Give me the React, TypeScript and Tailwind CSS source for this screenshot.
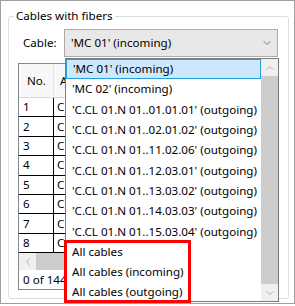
import { ChevronDown, ChevronUp, ChevronLeft } from "lucide-react";

const items = [
  "'MC 01' (incoming)",
  "'MC 02' (incoming)",
  "'C.CL 01.N 01..01.01.01' (outgoing)",
  "'C.CL 01.N 01..02.01.02' (outgoing)",
  "'C.CL 01.N 01..11.02.06' (outgoing)",
  "'C.CL 01.N 01..12.03.01' (outgoing)",
  "'C.CL 01.N 01..13.03.02' (outgoing)",
  "'C.CL 01.N 01..14.03.03' (outgoing)",
  "'C.CL 01.N 01..15.03.04' (outgoing)",
  "All cables",
  "All cables (incoming)",
  "All cables (outgoing)",
];

const rows = [1, 2, 3, 4, 5, 6, 7, 8];

function DropdownList() {
  return (
    <div className="absolute left-[64px] top-[57px] flex h-[244px] w-[214px] border border-[#7a7a7a] bg-white">
      <ul className="flex-1">
        {items.map((item, i) => (
          <li
            key={item}
            className={`flex h-[20.3px] items-center whitespace-nowrap pl-[6px] ${
              i === 0 ? "border border-[#26a0da] bg-[#cce8ff] pl-[5px]" : ""
            }`}
          >
            {item}
          </li>
        ))}
      </ul>
      <div className="flex w-[17px] flex-col bg-[#f0f0f0]">
        <div className="flex h-[17px] items-center justify-center text-[#a0a0a0]">
          <ChevronUp size={12} strokeWidth={1.5} />
        </div>
        <div className="flex-1 bg-[#cdcdcd]" />
        <div className="flex h-[17px] items-center justify-center text-[#a0a0a0]">
          <ChevronDown size={12} strokeWidth={1.5} />
        </div>
      </div>
    </div>
  );
}

function CableTable() {
  return (
    <div className="ml-[9px] mr-[10px] mt-[6px] flex h-[227px] flex-col border border-[#828790] bg-white">
      <div className="flex h-[34px] border-b border-[#d5d5d5] bg-[#f8f8f8]">
        <div className="flex w-[35px] items-center border-r border-[#e5e5e5] pl-[8px]">No.</div>
        <div className="flex flex-1 items-center pl-[6px]">A</div>
      </div>
      {rows.map((n) => (
        <div key={n} className="flex h-[19.4px] border-b border-black">
          <div className="flex w-[35px] items-center border-r border-black pl-[4px]">{n}</div>
          <div className="flex flex-1 items-center pl-[3px]">C</div>
        </div>
      ))}
      <div className="flex h-[17px] bg-[#f0f0f0]">
        <div className="flex w-[17px] items-center justify-center text-[#a0a0a0]">
          <ChevronLeft size={12} strokeWidth={1.5} />
        </div>
        <div className="flex-1 bg-[#cdcdcd]" />
      </div>
      <div className="flex flex-1 items-center pl-[4px]">0 of 144</div>
    </div>
  );
}

export default function App() {
  return (
    <div className="h-[306px] w-[295px] bg-white text-[11.6px] leading-[16px] text-black [font-family:'Noto_Sans',sans-serif]">
      <div className="relative h-[304px] w-[295px] border border-[#a0a0a0] bg-white">
        <fieldset className="ml-[7px] mr-[5px] mt-[7px] h-[291px] rounded-[3px] border border-[#d5dfe5] px-0 pb-0">
          <legend className="ml-[5px] px-[2px] leading-[16px]">Cables with fibers</legend>
          <div className="mt-[5px] flex items-center">
            <span className="ml-[14px] w-[41px]">Cable:</span>
            <div className="flex h-[28px] w-[214px] items-center justify-between border border-[#acacac] bg-[#e8e8e8] pl-[6px] pr-[4px]">
              <span>'MC 01' (incoming)</span>
              <ChevronDown size={12} strokeWidth={1.5} className="text-[#555]" />
            </div>
          </div>
          <CableTable />
        </fieldset>
        <DropdownList />
        <div className="absolute left-[63px] top-[239px] h-[63px] w-[127px] border-[3px] border-[#ff0000]" />
      </div>
    </div>
  );
}
